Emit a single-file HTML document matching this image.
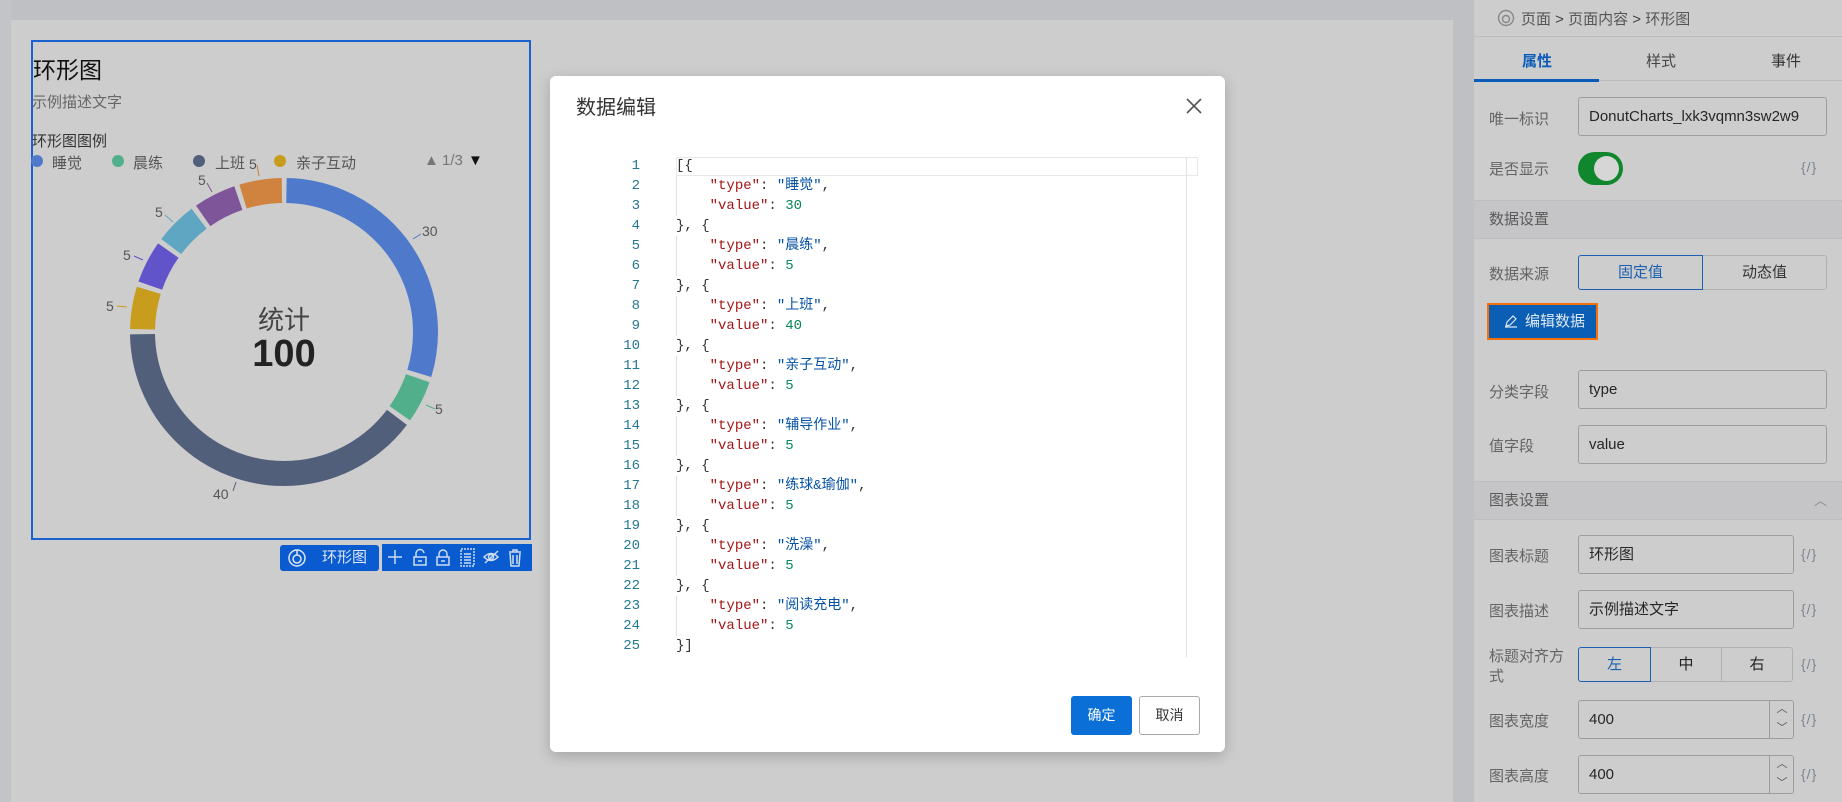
<!DOCTYPE html>
<html><head><meta charset="utf-8"><style>
*{margin:0;padding:0;box-sizing:border-box}
body{width:1842px;height:802px;overflow:hidden;background:#bfc0c4;position:relative;font-family:"Liberation Sans","Noto Sans CJK SC",sans-serif;}
.abs{position:absolute}
.canvas{left:11px;top:20px;width:1442px;height:782px;background:#cdcdcd}
.panel{left:1473px;top:0;width:369px;height:802px;background:#cdcdcd;border-left:1px solid #c0c0c2}
.lbl{position:absolute;left:15px;font-size:15px;color:#646464}
.inp{position:absolute;left:104px;height:39px;border:1px solid #9d9d9d;border-radius:3px;font-size:15px;color:#262626;padding-left:10px;line-height:37px}
.cc{position:absolute;left:327px;font-size:14px;color:#7d8591;letter-spacing:1px}
.sec{position:absolute;left:0;width:369px;height:39px;background:#c5c5c7;border-top:1px solid #bdbdbd;border-bottom:1px solid #bdbdbd;font-size:15px;color:#5a5a5a;padding-left:15px;line-height:37px}
.modal{left:550px;top:76px;width:675px;height:676px;background:#fff;border-radius:6px;box-shadow:0 4px 14px rgba(0,0,0,.2)}
.code{position:absolute;left:0;top:80px;font-family:"Liberation Mono","Noto Sans CJK SC",monospace;font-size:14px}
.ln,.tx{height:20px;line-height:20px;overflow:visible}
.ln{position:absolute;width:90px;text-align:right;color:#237893;left:0}
.tx{position:absolute;left:126px;white-space:pre;color:#333}
.g{position:absolute;left:126px;width:1px;height:40px;background:#e0e0e0}
.k{color:#a31515}.s{color:#0451a5}.n{color:#098658}
</style></head><body>
<div class="abs" style="left:0;top:0;width:11px;height:802px;background:#c3c4c7"></div>
<div class="abs canvas"></div>
<div class="abs" style="left:31px;top:40px;width:500px;height:500px;border:2px solid #1a62cf"></div>
<div class="abs" style="left:33px;top:51px;font-size:23px;color:#111">环形图</div>
<div class="abs" style="left:32px;top:91px;font-size:15px;color:#666">示例描述文字</div>
<div class="abs" style="left:32px;top:130px;font-size:15px;color:#333">环形图图例</div>
<div class="abs" style="left:0;top:152px;font-size:15px;color:#555;width:540px;height:20px">
<span class="abs" style="left:31px;top:3px;width:12px;height:12px;border-radius:6px;background:#4f7acb"></span><span class="abs" style="left:52px">睡觉</span>
<span class="abs" style="left:112px;top:3px;width:12px;height:12px;border-radius:6px;background:#51b08b"></span><span class="abs" style="left:133px">晨练</span>
<span class="abs" style="left:193px;top:3px;width:12px;height:12px;border-radius:6px;background:#525f7b"></span><span class="abs" style="left:215px">上班</span>
<span class="abs" style="left:274px;top:3px;width:12px;height:12px;border-radius:6px;background:#c89c1c"></span><span class="abs" style="left:296px">亲子互动</span>
<span class="abs" style="left:424px;color:#777">▲</span><span class="abs" style="left:442px;color:#777">1/3</span><span class="abs" style="left:468px;color:#111">▼</span>
</div>
<svg class="abs" style="left:0;top:0" width="560" height="560">
<g fill="none" stroke-width="25" transform="rotate(-90 284 332)">
<circle cx="284" cy="332" r="141.5" stroke="#4f7acb" stroke-dasharray="261.7 1000" stroke-dashoffset="-2.5"/>
<circle cx="284" cy="332" r="141.5" stroke="#51b08b" stroke-dasharray="39.5 1000" stroke-dashoffset="-269.2"/>
<circle cx="284" cy="332" r="141.5" stroke="#525f7b" stroke-dasharray="350.6 1000" stroke-dashoffset="-313.7"/>
<circle cx="284" cy="332" r="141.5" stroke="#c89c1c" stroke-dasharray="39.5 1000" stroke-dashoffset="-669.3"/>
<circle cx="284" cy="332" r="141.5" stroke="#6153c9" stroke-dasharray="39.5 1000" stroke-dashoffset="-713.8"/>
<circle cx="284" cy="332" r="141.5" stroke="#5ea6c1" stroke-dasharray="39.5 1000" stroke-dashoffset="-758.2"/>
<circle cx="284" cy="332" r="141.5" stroke="#7f5599" stroke-dasharray="39.5 1000" stroke-dashoffset="-802.7"/>
<circle cx="284" cy="332" r="141.5" stroke="#cf833f" stroke-dasharray="39.5 1000" stroke-dashoffset="-847.1"/>
</g>
<g stroke-width="1" fill="none">
<path d="M413 239l8-5" stroke="#4f7acb"/><path d="M426 405l9 4" stroke="#51b08b"/>
<path d="M236 482l-3 9" stroke="#525f7b"/><path d="M117 306l10 1" stroke="#c89c1c"/>
<path d="M134 256l9 4" stroke="#6153c9"/><path d="M165 215l8 7" stroke="#5ea6c1"/>
<path d="M207 183l5 9" stroke="#7f5599"/><path d="M257 165l2 11" stroke="#cf833f"/>
</g>
<g font-size="14" fill="#555" font-family="Liberation Sans,sans-serif">
<text x="422" y="236">30</text><text x="435" y="414">5</text><text x="213" y="499">40</text>
<text x="106" y="311">5</text><text x="123" y="260">5</text><text x="155" y="217">5</text>
<text x="198" y="185">5</text><text x="249" y="169">5</text>
</g>
<text x="284" y="329" text-anchor="middle" font-size="26" fill="#444" font-family="Liberation Sans,Noto Sans CJK SC,sans-serif">统计</text>
<text x="284" y="366" text-anchor="middle" font-size="38" font-weight="bold" fill="#222" font-family="Liberation Sans,sans-serif">100</text>
</svg>
<div class="abs" style="left:280px;top:545px;width:99px;height:26px;background:#0a5bd0;border-radius:3px;color:#dce6f5;font-size:15px;line-height:26px;padding-left:42px">环形图</div>
<svg class="abs" style="left:287px;top:548px" width="20" height="20"><circle cx="10" cy="10" r="8" fill="none" stroke="#dce6f5" stroke-width="1.5"/><circle cx="10" cy="11" r="4" fill="none" stroke="#dce6f5" stroke-width="1.5"/><path d="M10 2v5" stroke="#dce6f5" stroke-width="1.5"/></svg>
<div class="abs" style="left:382px;top:544px;width:150px;height:27px;background:#0a5bd0"></div>
<svg class="abs" style="left:382px;top:544px" width="150" height="27" fill="none" stroke="#cfdcf2" stroke-width="1.5">
<path d="M13 6v14M6 13h14"/>
<rect x="32" y="13" width="12" height="8"/><path d="M34 13v-3a4 4 0 0 1 8-1"/><path d="M36 17h4"/>
<rect x="55" y="13" width="12" height="8"/><path d="M57 13v-3a4 4 0 0 1 8 0v3"/><path d="M59 17h4"/>
<rect x="79" y="5" width="13" height="17" stroke-dasharray="2 1"/><path d="M82 10h7M82 13h7M82 16h7M82 19h7"/>
<path d="M102 13q7-7 14 0q-7 7-14 0z"/><circle cx="109" cy="13" r="2.5"/><path d="M103 19l13-12"/>
<path d="M127 8h12M131 8v-2h4v2M128 9l1 13h8l1-13M131 11v9M135 11v9"/>
</svg>
<div class="abs panel">
<svg class="abs" style="left:23px;top:9px" width="18" height="18"><circle cx="9" cy="9" r="7.5" fill="none" stroke="#888" stroke-width="1.4"/><circle cx="9" cy="10" r="3.5" fill="none" stroke="#888" stroke-width="1.4"/></svg>
<div class="abs" style="left:47px;top:8px;font-size:15px;color:#555">页面 <span style="color:#444">&gt;</span> 页面内容 <span style="color:#444">&gt;</span> 环形图</div>
<div class="abs" style="left:0;top:36px;width:369px;height:45px;border-top:1px solid #bdbdbd;border-bottom:1px solid #bdbdbd"></div>
<div class="abs" style="left:0;top:79px;width:125px;height:3px;background:#0b5cb8"></div>
<div class="abs" style="left:48px;top:50px;font-size:15px;color:#0b5cb8;font-weight:bold">属性</div>
<div class="abs" style="left:172px;top:50px;font-size:15px;color:#444">样式</div>
<div class="abs" style="left:297px;top:50px;font-size:15px;color:#333">事件</div>
<div class="lbl" style="top:108px">唯一标识</div>
<div class="inp" style="top:97px;width:249px">DonutCharts_lxk3vqmn3sw2w9</div>
<div class="lbl" style="top:158px">是否显示</div>
<div class="abs" style="left:104px;top:152px;width:45px;height:33px;border-radius:17px;background:#10872c"></div>
<div class="abs" style="left:120px;top:156px;width:25px;height:25px;border-radius:13px;background:#d6d6d6"></div>
<div class="cc" style="top:159px">{/}</div>
<div class="sec" style="top:200px">数据设置</div>
<div class="lbl" style="top:263px">数据来源</div>
<div class="abs" style="left:104px;top:255px;width:125px;height:35px;border:1px solid #1a5fb0;border-radius:3px 0 0 3px;color:#1a5fb0;font-size:15px;text-align:center;line-height:33px">固定值</div>
<div class="abs" style="left:229px;top:255px;width:124px;height:35px;border:1px solid #b0b0b0;border-left:0;border-radius:0 3px 3px 0;color:#333;font-size:15px;text-align:center;line-height:33px">动态值</div>
<div class="abs" style="left:13px;top:303px;width:111px;height:37px;border:2px solid #f5700a;background:#0a5fb4;color:#dfe7f3;font-size:15px;line-height:33px;padding-left:36px">编辑数据</div>
<svg class="abs" style="left:30px;top:314px" width="14" height="14" fill="none" stroke="#dfe7f3" stroke-width="1.2"><path d="M2 12l1-4 6-6 3 3-6 6zM1 13h12"/></svg>
<div class="lbl" style="top:381px">分类字段</div>
<div class="inp" style="top:370px;width:249px">type</div>
<div class="lbl" style="top:435px">值字段</div>
<div class="inp" style="top:425px;width:249px">value</div>
<div class="sec" style="top:481px">图表设置<span class="abs" style="left:340px;top:0;color:#888;font-size:13px">︿</span></div>
<div class="lbl" style="top:545px">图表标题</div>
<div class="inp" style="top:535px;width:216px">环形图</div><div class="cc" style="top:546px">{/}</div>
<div class="lbl" style="top:600px">图表描述</div>
<div class="inp" style="top:590px;width:216px">示例描述文字</div><div class="cc" style="top:601px">{/}</div>
<div class="lbl" style="top:647px;line-height:20px;width:80px">标题对齐方<br>式</div>
<div class="abs" style="left:104px;top:647px;width:73px;height:35px;border:1px solid #1a5fb0;border-radius:3px 0 0 3px;color:#1a5fb0;font-size:15px;text-align:center;line-height:33px">左</div>
<div class="abs" style="left:177px;top:647px;width:71px;height:35px;border:1px solid #b0b0b0;border-left:0;color:#222;font-size:15px;text-align:center;line-height:33px">中</div>
<div class="abs" style="left:247px;top:647px;width:72px;height:35px;border:1px solid #b0b0b0;border-radius:0 3px 3px 0;color:#222;font-size:15px;text-align:center;line-height:33px">右</div>
<div class="cc" style="top:656px">{/}</div>
<div class="lbl" style="top:710px">图表宽度</div>
<div class="inp" style="top:700px;width:216px">400</div>
<div class="abs" style="left:295px;top:700px;width:25px;height:39px;border-left:1px solid #9d9d9d;font-size:11px;color:#555;text-align:center;line-height:19px">︿<br>﹀</div>
<div class="cc" style="top:711px">{/}</div>
<div class="lbl" style="top:765px">图表高度</div>
<div class="inp" style="top:755px;width:216px">400</div>
<div class="abs" style="left:295px;top:755px;width:25px;height:39px;border-left:1px solid #9d9d9d;font-size:11px;color:#555;text-align:center;line-height:19px">︿<br>﹀</div>
<div class="cc" style="top:766px">{/}</div>
</div>
<div class="abs modal">
<div class="abs" style="left:26px;top:15px;font-size:20px;color:#333">数据编辑</div>
<svg class="abs" style="left:636px;top:22px" width="16" height="16" stroke="#555" stroke-width="1.6"><path d="M1 1l14 14M15 1L1 15"/></svg>
<div class="abs" style="left:126px;top:81px;width:522px;height:19px;border:1px solid #e8e8e8"></div>
<div class="abs" style="left:636px;top:81px;width:1px;height:500px;background:#e2e2e2"></div>
<div class="code">
<div class="g" style="top:20px"></div><div class="g" style="top:80px"></div><div class="g" style="top:140px"></div><div class="g" style="top:200px"></div><div class="g" style="top:260px"></div><div class="g" style="top:320px"></div><div class="g" style="top:380px"></div><div class="g" style="top:440px"></div>
<div class="ln" style="top:0">1</div><div class="tx" style="top:0">[{</div>
<div class="ln" style="top:20px">2</div><div class="tx" style="top:20px">    <span class="k">"type"</span>: <span class="s">"睡觉"</span>,</div>
<div class="ln" style="top:40px">3</div><div class="tx" style="top:40px">    <span class="k">"value"</span>: <span class="n">30</span></div>
<div class="ln" style="top:60px">4</div><div class="tx" style="top:60px">}, {</div>
<div class="ln" style="top:80px">5</div><div class="tx" style="top:80px">    <span class="k">"type"</span>: <span class="s">"晨练"</span>,</div>
<div class="ln" style="top:100px">6</div><div class="tx" style="top:100px">    <span class="k">"value"</span>: <span class="n">5</span></div>
<div class="ln" style="top:120px">7</div><div class="tx" style="top:120px">}, {</div>
<div class="ln" style="top:140px">8</div><div class="tx" style="top:140px">    <span class="k">"type"</span>: <span class="s">"上班"</span>,</div>
<div class="ln" style="top:160px">9</div><div class="tx" style="top:160px">    <span class="k">"value"</span>: <span class="n">40</span></div>
<div class="ln" style="top:180px">10</div><div class="tx" style="top:180px">}, {</div>
<div class="ln" style="top:200px">11</div><div class="tx" style="top:200px">    <span class="k">"type"</span>: <span class="s">"亲子互动"</span>,</div>
<div class="ln" style="top:220px">12</div><div class="tx" style="top:220px">    <span class="k">"value"</span>: <span class="n">5</span></div>
<div class="ln" style="top:240px">13</div><div class="tx" style="top:240px">}, {</div>
<div class="ln" style="top:260px">14</div><div class="tx" style="top:260px">    <span class="k">"type"</span>: <span class="s">"辅导作业"</span>,</div>
<div class="ln" style="top:280px">15</div><div class="tx" style="top:280px">    <span class="k">"value"</span>: <span class="n">5</span></div>
<div class="ln" style="top:300px">16</div><div class="tx" style="top:300px">}, {</div>
<div class="ln" style="top:320px">17</div><div class="tx" style="top:320px">    <span class="k">"type"</span>: <span class="s">"练球&amp;瑜伽"</span>,</div>
<div class="ln" style="top:340px">18</div><div class="tx" style="top:340px">    <span class="k">"value"</span>: <span class="n">5</span></div>
<div class="ln" style="top:360px">19</div><div class="tx" style="top:360px">}, {</div>
<div class="ln" style="top:380px">20</div><div class="tx" style="top:380px">    <span class="k">"type"</span>: <span class="s">"洗澡"</span>,</div>
<div class="ln" style="top:400px">21</div><div class="tx" style="top:400px">    <span class="k">"value"</span>: <span class="n">5</span></div>
<div class="ln" style="top:420px">22</div><div class="tx" style="top:420px">}, {</div>
<div class="ln" style="top:440px">23</div><div class="tx" style="top:440px">    <span class="k">"type"</span>: <span class="s">"阅读充电"</span>,</div>
<div class="ln" style="top:460px">24</div><div class="tx" style="top:460px">    <span class="k">"value"</span>: <span class="n">5</span></div>
<div class="ln" style="top:480px">25</div><div class="tx" style="top:480px">}]</div>
</div>
<div class="abs" style="left:521px;top:620px;width:61px;height:39px;background:#0a6fd6;border-radius:3px;color:#fff;font-size:14px;text-align:center;line-height:39px">确定</div>
<div class="abs" style="left:589px;top:620px;width:61px;height:39px;border:1px solid #aaa;border-radius:3px;color:#333;font-size:14px;text-align:center;line-height:37px">取消</div>
</div>
</body></html>
